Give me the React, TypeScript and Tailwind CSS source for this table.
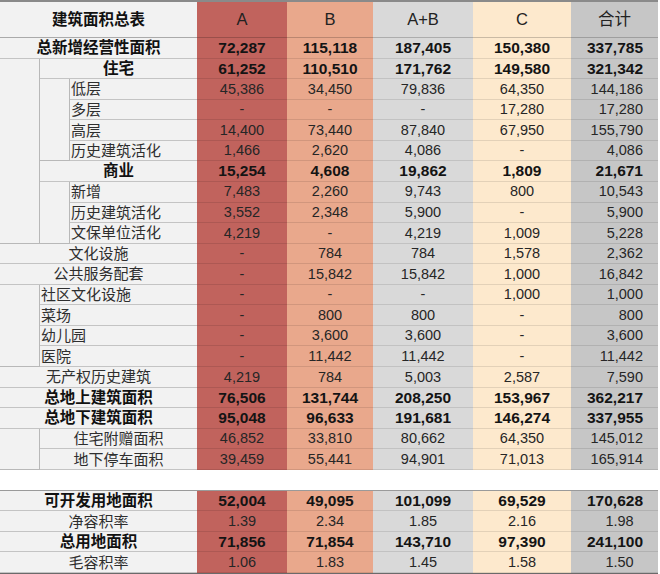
import React from "react";

type Kind = "full" | "l1" | "l1left" | "l2";

type RowData = {
  label: string;
  vals: string[];
  bold?: boolean;
  kind?: Kind;
};

const DATA_COLS = [
  "w-[90px] bg-[#c1635d]",
  "w-[86px] bg-[#e9a88c]",
  "w-[100px] bg-[#d9d9d9]",
  "w-[98px] bg-[#fde9cd]",
  "w-[87px] bg-[#c6c6c6]",
];

const LABEL_W: Record<Kind, string> = {
  full: "w-[197px] justify-center",
  l1: "w-[157px] justify-center",
  l1left: "w-[157px] justify-start pl-[1px]",
  l2: "w-[127px] justify-start pl-[1px]",
};

function Row({ label, vals, bold, kind = "full", h = "h-[20.57px]" }: RowData & { h?: string }) {
  const decimal = vals[4].includes(".");
  return (
    <div className={`flex ${h}`}>
      <div
        className={`flex items-center ${LABEL_W[kind]} bg-[#f2f2f2] border-b border-[#c4c4c4] leading-none ${
          bold ? "font-bold text-[15.5px] text-[#111]" : "text-[15px] text-[#2e2e2e]"
        }`}
      >
        {label}
      </div>
      {vals.map((v, i) => {
        let align = "justify-center";
        if (i === 4) align = decimal ? "justify-center pl-[10px]" : "justify-end pr-[15px]";
        return (
          <div
            key={i}
            className={`flex items-center ${align} ${DATA_COLS[i]} border-b border-black/10 leading-none ${
              bold ? "font-bold text-[15.5px] text-[#141414]" : "text-[14.5px] text-[#262626]"
            }`}
          >
            {v}
          </div>
        );
      })}
    </div>
  );
}

function Indent({ w, children }: { w: string; children: React.ReactNode }) {
  return (
    <div className="flex">
      <div className={`${w} shrink-0 bg-[#f2f2f2] border-r border-b border-[#b8b8b8]`} />
      <div className="flex flex-col">{children}</div>
    </div>
  );
}

export default function App() {
  return (
    <div className="w-[660px] h-[574px] bg-white font-['Liberation_Sans','Noto_Sans_CJK_SC',sans-serif]">
      <div className="w-[658px] flex flex-col">
        {/* header */}
        <div className="flex h-[38px] border-t-2 border-[#8a8a8a]">
          <div className="w-[197px] flex items-center justify-center bg-[#f2f2f2] border-b border-[#aaaaaa] font-bold text-[15.5px] text-[#111] leading-none">
            建筑面积总表
          </div>
          {["A", "B", "A+B", "C", "合计"].map((h, i) => (
            <div
              key={h}
              className={`flex items-center justify-center ${DATA_COLS[i]} border-b border-black/20 text-[16.5px] text-[#222] leading-none`}
            >
              {h}
            </div>
          ))}
        </div>

        <Row label="总新增经营性面积" bold vals={["72,287", "115,118", "187,405", "150,380", "337,785"]} />
        <Indent w="w-[40px]">
          <Row label="住宅" kind="l1" bold vals={["61,252", "110,510", "171,762", "149,580", "321,342"]} />
          <Indent w="w-[30px]">
            <Row label="低层" kind="l2" vals={["45,386", "34,450", "79,836", "64,350", "144,186"]} />
            <Row label="多层" kind="l2" vals={["-", "-", "-", "17,280", "17,280"]} />
            <Row label="高层" kind="l2" vals={["14,400", "73,440", "87,840", "67,950", "155,790"]} />
            <Row label="历史建筑活化" kind="l2" vals={["1,466", "2,620", "4,086", "-", "4,086"]} />
          </Indent>
          <Row label="商业" kind="l1" bold vals={["15,254", "4,608", "19,862", "1,809", "21,671"]} />
          <Indent w="w-[30px]">
            <Row label="新增" kind="l2" vals={["7,483", "2,260", "9,743", "800", "10,543"]} />
            <Row label="历史建筑活化" kind="l2" vals={["3,552", "2,348", "5,900", "-", "5,900"]} />
            <Row label="文保单位活化" kind="l2" vals={["4,219", "-", "4,219", "1,009", "5,228"]} />
          </Indent>
        </Indent>
        <Row label="文化设施" vals={["-", "784", "784", "1,578", "2,362"]} />
        <Row label="公共服务配套" vals={["-", "15,842", "15,842", "1,000", "16,842"]} />
        <Indent w="w-[40px]">
          <Row label="社区文化设施" kind="l1left" vals={["-", "-", "-", "1,000", "1,000"]} />
          <Row label="菜场" kind="l1left" vals={["-", "800", "800", "-", "800"]} />
          <Row label="幼儿园" kind="l1left" vals={["-", "3,600", "3,600", "-", "3,600"]} />
          <Row label="医院" kind="l1left" vals={["-", "11,442", "11,442", "-", "11,442"]} />
        </Indent>
        <Row label="无产权历史建筑" vals={["4,219", "784", "5,003", "2,587", "7,590"]} />
        <Row label="总地上建筑面积" bold vals={["76,506", "131,744", "208,250", "153,967", "362,217"]} />
        <Row label="总地下建筑面积" bold vals={["95,048", "96,633", "191,681", "146,274", "337,955"]} />
        <Indent w="w-[40px]">
          <Row label="住宅附赠面积" kind="l1" vals={["46,852", "33,810", "80,662", "64,350", "145,012"]} />
          <Row label="地下停车面积" kind="l1" vals={["39,459", "55,441", "94,901", "71,013", "165,914"]} />
        </Indent>
      </div>

      <div className="h-[20px]" />

      <div className="w-[658px] flex flex-col border-t border-[#9a9a9a] border-b-2 border-b-[#6a6a6a]">
        <Row h="h-[20.5px]" label="可开发用地面积" bold vals={["52,004", "49,095", "101,099", "69,529", "170,628"]} />
        <Row h="h-[20.5px]" label="净容积率" vals={["1.39", "2.34", "1.85", "2.16", "1.98"]} />
        <Row h="h-[20.5px]" label="总用地面积" bold vals={["71,856", "71,854", "143,710", "97,390", "241,100"]} />
        <Row h="h-[20.5px]" label="毛容积率" vals={["1.06", "1.83", "1.45", "1.58", "1.50"]} />
      </div>
    </div>
  );
}
